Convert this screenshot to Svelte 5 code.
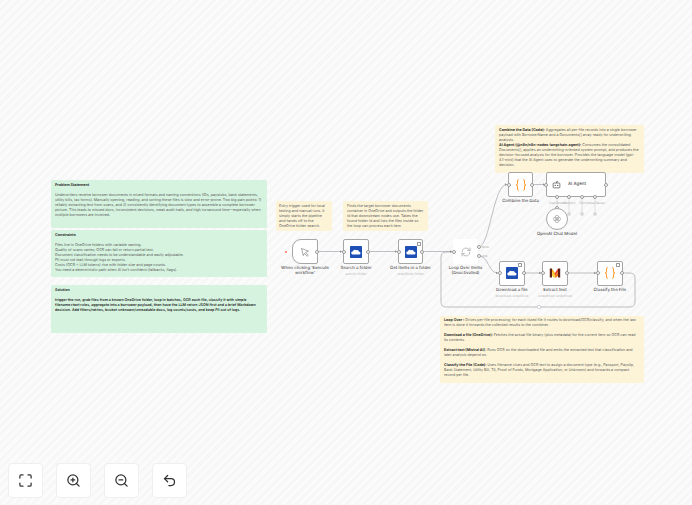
<script lang="ts">
	const greenNotes = [
		{
			title: 'Problem Statement',
			top: 180, height: 48,
			paras: ['Underwriters receive borrower documents in mixed formats and naming conventions (IDs, paystubs, bank statements, utility bills, tax forms). Manually opening, reading, and sorting these files is slow and error-prone. Two big pain points: 1) reliably extracting text from scans, and 2) consistently identifying document types to assemble a complete borrower picture. This leads to missed docs, inconsistent decisions, weak audit trails, and high turnaround time—especially when multiple borrowers are involved.'],
		},
		{
			title: 'Constraints',
			top: 230, height: 47,
			paras: ['Files live in OneDrive folders with variable naming.', 'Quality of scans varies; OCR can fail or return partial text.', 'Document classification needs to be understandable and easily adjustable.', 'PII must not leak through logs or exports.', 'Costs (OCR + LLM tokens) rise with folder size and page counts.', 'You need a deterministic path when AI isn’t confident (fallbacks, flags).'],
		},
		{
			title: 'Solution',
			top: 285, height: 48, bold: true,
			paras: ['trigger the run, grab files from a known OneDrive folder, loop in batches, OCR each file, classify it with simple filename+text rules, aggregate into a borrower payload, then have the LLM return JSON first and a brief Markdown decision. Add filters/retries, bucket unknown/unreadable docs, log counts/costs, and keep PII out of logs.'],
		},
	];

	const nodes = [
		{ id: 'trigger', x: 292, y: 239, w: 26, icon: 'cursor', label: ['When clicking ‘Execute', 'workflow’'], shape: 'trigger', handles: ['out'] },
		{ id: 'search', x: 343, y: 239, w: 26, icon: 'onedrive', label: ['Search a folder'], sub: 'search: folder', handles: ['in', 'out'] },
		{ id: 'get', x: 398, y: 239, w: 25, icon: 'onedrive', label: ['Get items in a folder'], sub: 'undefined: folder', pin: true, handles: ['in', 'out'] },
		{ id: 'loop', x: 453, y: 239, w: 25, icon: 'loop', label: ['Loop Over Items', '(Deactivated)'], shape: 'off', handles: ['in'] },
		{ id: 'combine', x: 508, y: 172, w: 25, icon: 'code', label: ['Combine the Data'], handles: ['in', 'out'] },
		{ id: 'download', x: 499, y: 260.5, w: 25.5, icon: 'onedrive', label: ['Download a file'], sub: 'download: undefined', pin: true, handles: ['in', 'out'] },
		{ id: 'extract', x: 542, y: 260.5, w: 26, icon: 'mistral', label: ['Extract text'], sub: 'undefined: undefined', handles: ['in', 'out'] },
		{ id: 'classify', x: 597, y: 260.5, w: 25.5, icon: 'code', label: ['Classify the File'], pin: true, handles: ['in', 'out'] },
	];

	const edges = [
		'M318 251.5H342',
		'M369 251.5H397',
		'M423 251.5H452',
		'M478.5 247C490 247 493 184.5 507 184.5',
		'M478.5 256C489 256 488 273 498 273',
		'M525 273H541',
		'M568 273H596',
		'M533 184.5H545',
		'M622.5 273H630Q635 273 635 278V302Q635 307 630 307H446Q441 307 441 302V257Q441 252 446 252H452',
	];

	const stems = ['M569 197V213', 'M582 197V213', 'M595 197V213', 'M557 197V208'];

	const arrows = [[343, 251.5], [398, 251.5], [453, 251.5], [508, 184.5], [499, 273], [542, 273], [597, 273], [546, 184.5]];
	const handleDots = [[557, 197], [569, 197], [582, 197], [595, 197], [557, 208], [606, 184.5], [546, 184.5]];
	const plusBoxes = [569, 582, 595];
	const subLabels = [
		{ x: 557, text: 'Chat Model' },
		{ x: 569.5, text: 'Memory' },
		{ x: 582, text: 'Tool' },
		{ x: 595, text: 'Output Parser' },
	];
</script>

{#snippet icon(name: string)}
	{#if name === 'onedrive'}
		<svg class="ico" viewBox="0 0 12 12"><rect width="12" height="12" rx="0.8" fill="#1d4fb4" /><path d="M2.6 8.4a1.4 1.4 0 0 1 .1-2.8 2 2 0 0 1 3.3-1.3 2.2 2.2 0 0 1 3 1.5 1.3 1.3 0 0 1 .4 2.6z" fill="#fff" /></svg>
	{:else if name === 'cursor'}
		<svg class="ico" viewBox="0 0 12 12"><path d="M2.5 2.5l7 2.6-2.9 1.2 2.6 3-1.1 1-2.6-3L4.3 9.6z" fill="none" stroke="#555" stroke-width="0.5" stroke-linejoin="round" /></svg>
	{:else if name === 'loop'}
		<svg class="ico" viewBox="0 0 12 12"><g fill="none" stroke="#a5a5a5" stroke-width="0.7" stroke-linecap="round"><path d="M2 6a4 4 0 0 1 7-2.6l.9 1" /><path d="M10 6a4 4 0 0 1-7 2.6l-.9-1" /><path d="M10 2v2.5H7.6" /><path d="M2 10V7.5h2.4" /></g></svg>
	{:else if name === 'code'}
		<svg class="ico" viewBox="0 0 12 12"><g fill="none" stroke="#ff9b26" stroke-width="1"><path d="M4 .8H3.4Q2.5 .8 2.5 1.8V4.8Q2.5 6 1 6Q2.5 6 2.5 7.2V10.2Q2.5 11.2 3.4 11.2H4" /><path d="M8 .8H8.6Q9.5 .8 9.5 1.8V4.8Q9.5 6 11 6Q9.5 6 9.5 7.2V10.2Q9.5 11.2 8.6 11.2H8" /></g></svg>
	{:else if name === 'mistral'}
		<svg class="ico" viewBox="0 0 12 12"><path d="M.8 1.5H3V10.5H.8z" fill="#5a1f12" /><path d="M3 1.5L6 6V9L3 5z" fill="#fbb21e" /><path d="M3 5L6 9V10.5H4.6L3 8.5z" fill="#f9d23c" /><path d="M9 1.5L6 6V9L9 5z" fill="#ee3f23" /><path d="M9 5L6 9V10.5H7.4L9 8.5z" fill="#f47a1f" /><path d="M9 1.5H11.2V10.5H9z" fill="#5a1f12" /></svg>
	{/if}
{/snippet}

<main class="canvas">
	{#each greenNotes as note}
		<section class="note green" class:strong={note.bold} style="top: {note.top}px; height: {note.height}px">
			<h3>{note.title}</h3>
			{#each note.paras as p}
				<p>{p}</p>
			{/each}
		</section>
	{/each}

	<section class="note yellow n1">
		<p>Entry trigger used for local testing and manual runs. It simply starts the pipeline and hands off to the OneDrive folder search.</p>
	</section>
	<section class="note yellow n2">
		<p>Finds the target borrower documents container in OneDrive and outputs the folder id that downstream nodes use. Takes the found folder id and lists the files inside so the loop can process each item</p>
	</section>
	<section class="note yellow n3">
		<p><b>Combine the Data (Code):</b> Aggregates all per-file records into a single borrower payload with BorrowerName and a Documents[] array ready for underwriting analysis.</p>
		<p><b>AI Agent (@n8n/n8n-nodes-langchain.agent):</b> Consumes the consolidated Documents[], applies an underwriting-oriented system prompt, and produces the decision-focused analysis for the borrower. Provides the language model (gpt-4.1-mini) that the AI Agent uses to generate the underwriting summary and decision.</p>
	</section>
	<section class="note yellow n4">
		<p><b>Loop Over :</b> Drives per-file processing; for each listed file it routes to download/OCR/classify, and when the last item is done it forwards the collected results to the combiner.</p>
		<p><b>Download a file (OneDrive):</b> Fetches the actual file binary (plus metadata) for the current item so OCR can read its contents.</p>
		<p><b>Extract text (Mistral AI):</b> Runs OCR on the downloaded file and emits the extracted text that classification and later analysis depend on.</p>
		<p><b>Classify the File (Code):</b> Uses filename clues and OCR text to assign a document type (e.g., Passport, Payslip, Bank Statement, Utility Bill, T4, Proof of Funds, Mortgage Application, or Unknown) and forwards a compact record per file.</p>
	</section>

	<svg class="edges" viewBox="0 0 692 505">
		{#each edges as d}
			<path {d} fill="none" stroke="#a5a5ad" stroke-width="0.7" />
		{/each}
		{#each stems as d}
			<path {d} fill="none" stroke="#b5b5bb" stroke-width="0.4" />
		{/each}
		{#each arrows as [x, y]}
			<path d="M{x - 3} {y - 1.2}L{x - 1} {y}L{x - 3} {y + 1.2}z" fill="#8f8f98" />
		{/each}
		<rect x="537.5" y="305.5" width="3" height="3" rx="0.5" fill="#fff" stroke="#a3a3ab" stroke-width="0.4" />
		{#each plusBoxes as x}
			<rect x={x - 1.5} y="212.5" width="3" height="3" rx="0.5" fill="#ececef" stroke="#c4c4ca" stroke-width="0.3" />
			<path d="M{x - 0.7} 214H{x + 0.7}M{x} 213.3V214.7" stroke="#777" stroke-width="0.3" />
		{/each}
	</svg>

	{#each nodes as n}
		<div class="node {n.shape ?? ''}" style="left: {n.x}px; top: {n.y}px; width: {n.w}px">
			{@render icon(n.icon)}
			{#if n.pin}<span class="pin"></span>{/if}
			{#if n.handles.includes('in')}<span class="handle left"></span>{/if}
			{#if n.handles.includes('out')}<span class="handle right"></span>{/if}
			<div class="caption">
				{#each n.label as line}<div>{line}</div>{/each}
				{#if n.sub}<div class="sub">{n.sub}</div>{/if}
			</div>
		</div>
	{/each}

	<span class="spark"></span>
	<span class="port done"><i></i>done</span>
	<span class="port loop"><i></i>loop</span>

	<div class="node agent">
		<svg class="ico" viewBox="0 0 12 12"><g fill="none" stroke="#444" stroke-width="0.9"><rect x="1.5" y="4" width="9" height="6.5" rx="1.2" /><path d="M6 4V2.2H8" /></g><circle cx="4.3" cy="7.2" r="0.8" fill="#444" /><circle cx="7.7" cy="7.2" r="0.8" fill="#444" /></svg>
		<span class="agent-name">AI Agent</span>
	</div>
	{#each subLabels as s}
		<span class="sub-label" style="left: {s.x}px">{s.text}</span>
	{/each}
	{#each handleDots as [x, y]}
		<span class="dot" style="left: {x}px; top: {y}px"></span>
	{/each}

	<div class="chat">
		<svg class="ico" viewBox="0 0 12 12"><g fill="none" stroke="#a0a0a0" stroke-width="0.8"><circle cx="6" cy="3.8" r="2.2" /><circle cx="6" cy="8.2" r="2.2" /><circle cx="4" cy="6" r="2.2" /><circle cx="8" cy="6" r="2.2" /></g></svg>
		<div class="caption">OpenAI Chat Model</div>
	</div>

	<div class="controls">
		<button aria-label="Fit to view"><svg viewBox="0 0 24 24"><path d="M3 8V5a2 2 0 0 1 2-2h3M16 3h3a2 2 0 0 1 2 2v3M21 16v3a2 2 0 0 1-2 2h-3M8 21H5a2 2 0 0 1-2-2v-3" /></svg></button>
		<button aria-label="Zoom in"><svg viewBox="0 0 24 24"><circle cx="11" cy="11" r="8" /><path d="M21 21l-4.3-4.3M11 8v6M8 11h6" /></svg></button>
		<button aria-label="Zoom out"><svg viewBox="0 0 24 24"><circle cx="11" cy="11" r="8" /><path d="M21 21l-4.3-4.3M8 11h6" /></svg></button>
		<button aria-label="Undo"><svg viewBox="0 0 24 24"><path d="M9 14L4 9l5-5" /><path d="M4 9h10.5a5.5 5.5 0 0 1 0 11H11" /></svg></button>
	</div>
</main>

<style>
	:global(body) {
		margin: 0;
	}

	.canvas {
		position: relative;
		width: 692px;
		height: 505px;
		overflow: hidden;
		font-family: Inter, 'Liberation Sans', sans-serif;
		text-rendering: geometricPrecision;
		-webkit-font-smoothing: antialiased;
		background: repeating-linear-gradient(135deg, #f7f7f7 0 3px, #fbfbfb 3px 6px);
	}

	.note {
		position: absolute;
		box-sizing: border-box;
		border-radius: 1.5px;
		color: #5a5a5a;
		font-size: 3.65px;
		line-height: 5px;
	}

	.note p {
		margin: 0;
	}

	.green {
		left: 51px;
		width: 216px;
		padding: 2.2px 4px;
		background: #d6f3e0;
	}

	.green h3 {
		margin: 0 0 5px;
		font-size: 3.65px;
		line-height: 5px;
		font-weight: 700;
		color: #333;
	}

	.strong p {
		font-weight: 600;
		color: #2a2a2a;
	}

	.yellow {
		padding: 2px 4px;
		background: #fdf4d8;
	}

	.yellow b {
		font-weight: 700;
		color: #333;
	}

	.n1 {
		left: 276px;
		top: 201px;
		width: 56px;
		height: 30px;
		padding-left: 3px;
		padding-right: 3px;
	}

	.n2 {
		left: 343px;
		top: 201px;
		width: 85px;
		height: 30px;
	}

	.n3 {
		left: 495px;
		top: 125px;
		width: 149px;
		height: 48px;
	}

	.n4 {
		left: 440px;
		top: 316px;
		width: 204px;
		height: 67px;
		padding-top: 1px;
	}

	.n4 p + p {
		margin-top: 5px;
	}

	.edges {
		position: absolute;
		inset: 0;
		width: 692px;
		height: 505px;
	}

	.node {
		position: absolute;
		box-sizing: border-box;
		height: 25px;
		display: flex;
		align-items: center;
		justify-content: center;
		background: #fff;
		border: 0.7px solid #a6a6a6;
		border-radius: 2px;
	}

	.node.trigger {
		border-radius: 9px 2px 2px 9px;
	}

	.node.off {
		border-color: #fff;
	}

	.ico {
		width: 12px;
		height: 12px;
		flex: none;
	}

	.handle {
		position: absolute;
		top: 50%;
		box-sizing: border-box;
		width: 4px;
		height: 4px;
		margin-top: -2px;
		background: #fff;
		border: 0.5px solid #999;
		border-radius: 50%;
	}

	.handle.left {
		left: -2px;
	}

	.handle.right {
		right: -2px;
	}

	.pin {
		position: absolute;
		top: 1.5px;
		right: 1.5px;
		width: 2px;
		height: 2px;
		border: 0.4px solid #999;
		border-radius: 0.4px;
	}

	.caption {
		position: absolute;
		top: 100%;
		left: 50%;
		width: 70px;
		margin: 3.4px 0 0 -35px;
		text-align: center;
		font-size: 4.3px;
		line-height: 5px;
		font-weight: 500;
		color: #555;
	}

	.sub {
		margin-top: 0.8px;
		font-size: 3.3px;
		line-height: 4.4px;
		font-weight: 400;
		color: #b5b5b5;
	}

	.spark {
		position: absolute;
		left: 285px;
		top: 250.5px;
		width: 2.4px;
		height: 2.4px;
		border-radius: 50%;
		background: #ff6d5a;
	}

	.port {
		position: absolute;
		left: 476.5px;
		display: flex;
		align-items: center;
		gap: 1px;
		font-size: 3px;
		line-height: 4px;
		color: #a5a5a5;
	}

	.port i {
		box-sizing: border-box;
		width: 4px;
		height: 4px;
		background: #fff;
		border: 0.5px solid #999;
		border-radius: 50%;
	}

	.port.done {
		top: 245px;
	}

	.port.loop {
		top: 254px;
	}

	.agent {
		left: 546px;
		top: 172px;
		width: 60px;
		justify-content: flex-start;
		gap: 7px;
		padding-left: 5px;
	}

	.agent .ico {
		width: 9px;
		height: 9px;
	}

	.agent-name {
		font-size: 4.4px;
		font-weight: 500;
		color: #555;
	}

	.sub-label {
		position: absolute;
		top: 201px;
		transform: translateX(-50%);
		font-size: 3px;
		line-height: 4px;
		color: #a8a8a8;
		white-space: nowrap;
	}

	.dot {
		position: absolute;
		box-sizing: border-box;
		width: 4px;
		height: 4px;
		margin: -2px 0 0 -2px;
		background: #fff;
		border: 0.5px solid #999;
		border-radius: 50%;
	}

	.chat {
		position: absolute;
		left: 546px;
		top: 208px;
		box-sizing: border-box;
		width: 22px;
		height: 22px;
		display: flex;
		align-items: center;
		justify-content: center;
		background: #fff;
		border: 0.7px solid #a6a6a6;
		border-radius: 50%;
	}

	.chat .ico {
		width: 10px;
		height: 10px;
	}

	.controls {
		position: absolute;
		left: 8px;
		top: 462.5px;
		display: flex;
		gap: 13px;
	}

	.controls button {
		box-sizing: border-box;
		width: 35px;
		height: 35px;
		padding: 0;
		display: flex;
		align-items: center;
		justify-content: center;
		background: #fff;
		border: 1px solid #efefef;
		border-radius: 4px;
	}

	.controls svg {
		width: 15px;
		height: 15px;
		fill: none;
		stroke: #333;
		stroke-width: 2;
		stroke-linecap: round;
		stroke-linejoin: round;
	}
</style>
